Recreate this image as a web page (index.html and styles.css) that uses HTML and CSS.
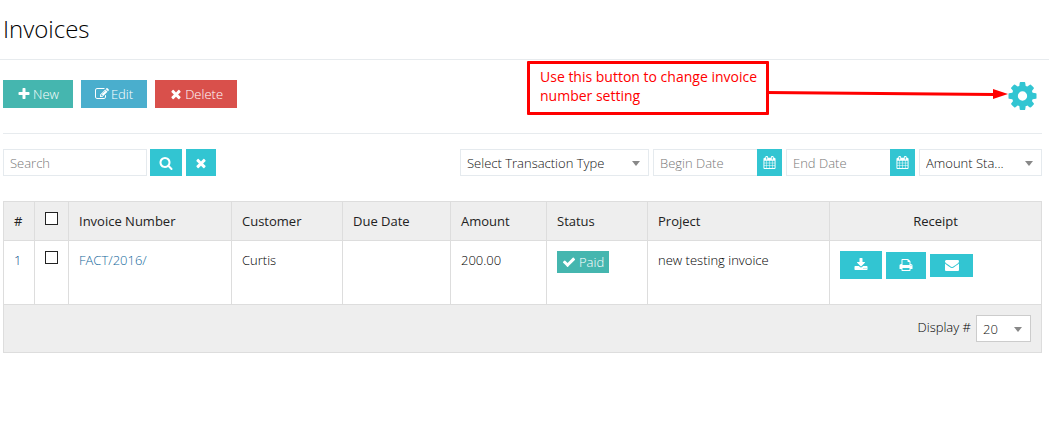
FILE: index.html
```html
<!DOCTYPE html>
<html lang="en">
<head>
<meta charset="utf-8">
<title>Invoices</title>
<link rel="stylesheet" href="styles.css">
</head>
<body>
<svg class="sprite" aria-hidden="true">
  <symbol id="plus" viewBox="0 0 1792 1792"><path d="M1600 736v192q0 40-28 68t-68 28h-416v416q0 40-28 68t-68 28h-192q-40 0-68-28t-28-68v-416h-416q-40 0-68-28t-28-68v-192q0-40 28-68t68-28h416v-416q0-40 28-68t68-28h192q40 0 68 28t28 68v416h416q40 0 68 28t28 68z"/></symbol>
  <symbol id="times" viewBox="0 0 1792 1792"><path d="M1490 1322q0 40-28 68l-136 136q-28 28-68 28t-68-28l-294-294-294 294q-28 28-68 28t-68-28l-136-136q-28-28-28-68t28-68l294-294-294-294q-28-28-28-68t28-68l136-136q28-28 68-28t68 28l294 294 294-294q28-28 68-28t68 28l136 136q28 28 28 68t-28 68l-294 294 294 294q28 28 28 68z"/></symbol>
  <symbol id="check" viewBox="0 0 1792 1792"><path d="M1671 566q0 40-28 68l-724 724-136 136q-28 28-68 28t-68-28l-136-136-362-362q-28-28-28-68t28-68l136-136q28-28 68-28t68 28l294 295 656-657q28-28 68-28t68 28l136 136q28 28 28 68z"/></symbol>
  <symbol id="search" viewBox="0 0 1792 1792"><path d="M1216 832q0-185-131.5-316.5t-316.5-131.5-316.5 131.5-131.5 316.5 131.5 316.5 316.5 131.5 316.5-131.5 131.5-316.5zm512 832q0 52-38 90t-90 38q-54 0-90-38l-343-342q-179 124-399 124-143 0-273.5-55.5t-225-150-150-225-55.5-273.5 55.5-273.5 150-225 225-150 273.5-55.5 273.5 55.5 225 150 150 225 55.5 273.5q0 220-124 399l343 343q37 37 37 90z"/></symbol>
  <symbol id="cog" viewBox="128 128 1536 1536"><path d="M1152 896q0-106-75-181t-181-75-181 75-75 181 75 181 181 75 181-75 75-181zm512-109v222q0 12-8 23t-20 13l-185 28q-19 54-39 91 35 50 107 138 10 12 10 25t-9 23q-27 37-99 108t-94 71q-12 0-26-9l-138-108q-44 23-91 38-16 136-29 186-7 28-36 28h-222q-14 0-24.5-8.5t-11.5-21.5l-28-184q-49-16-90-37l-141 107q-10 9-25 9-14 0-25-11-126-114-165-168-7-10-7-23 0-12 8-23 15-21 51-66.5t54-70.5q-27-50-41-99l-183-27q-13-2-21-12.5t-8-23.5v-222q0-12 8-23t19-13l186-28q14-46 39-92-40-57-107-138-10-12-10-24 0-10 9-23 26-36 98.5-107.5t94.5-71.5q13 0 26 10l138 107q44-23 91-38 16-136 29-186 7-28 36-28h222q14 0 24.5 8.5t11.5 21.5l28 184q49 16 90 37l142-107q9-9 24-9 13 0 25 10 129 119 165 170 7 8 7 22 0 12-8 23-15 21-51 66.5t-54 70.5q26 50 41 98l183 28q13 2 21 12.5t8 23.5z"/></symbol>
  <symbol id="download" viewBox="0 0 1792 1792"><path d="M1344 1344q0-26-19-45t-45-19-45 19-19 45 19 45 45 19 45-19 19-45zm256 0q0-26-19-45t-45-19-45 19-19 45 19 45 45 19 45-19 19-45zm128-224v320q0 40-28 68t-68 28h-1472q-40 0-68-28t-28-68v-320q0-40 28-68t68-28h465l135 136q58 56 136 56t136-56l136-136h464q40 0 68 28t28 68zm-325-569q17 41-14 70l-448 448q-18 19-45 19t-45-19l-448-448q-31-29-14-70 17-39 59-39h256v-448q0-26 19-45t45-19h256q26 0 45 19t19 45v448h256q42 0 59 39z"/></symbol>
  <symbol id="print" viewBox="0 0 1792 1792"><path d="M448 1536h896v-256h-896v256zm0-640h896v-384h-160q-40 0-68-28t-28-68v-160h-640v640zm1152 64q0-26-19-45t-45-19-45 19-19 45 19 45 45 19 45-19 19-45zm128 0v416q0 13-9.5 22.5t-22.5 9.5h-224v160q0 40-28 68t-68 28h-960q-40 0-68-28t-28-68v-160h-224q-13 0-22.5-9.5t-9.5-22.5v-416q0-79 56.5-135.5t135.5-56.5h64v-544q0-40 28-68t68-28h672q40 0 88 20t76 48l152 152q28 28 48 76t20 88v256h64q79 0 135.5 56.5t56.5 135.5z"/></symbol>
  <symbol id="envelope" viewBox="0 0 1792 1792"><path d="M1792 710v794q0 66-47 113t-113 47h-1472q-66 0-113-47t-47-113v-794q44 49 101 87 362 246 497 345 57 42 92.5 65.5t94.5 48 110 24.5h2q51 0 110-24.5t94.5-48 92.5-65.5q170-123 498-345 57-39 100-87zm0-294q0 79-49 151t-122 123q-376 261-468 325-10 7-42.5 31t-54 38.5-52 32.5-57.5 27-50 9h-2q-23 0-50-9t-57.5-27-52-32.5-54-38.5-42.5-31q-91-64-262-182.5t-205-142.5q-62-42-117-115.5t-55-136.5q0-78 41.5-130t118.5-52h1472q65 0 112.5 47t47.5 113z"/></symbol>
  <symbol id="edit" viewBox="0 0 1792 1792"><path d="M888 1184l116-116-152-152-116 116v56h96v96h56zm440-720q-16-16-33 1l-350 350q-17 17-1 33t33-1l350-350q17-17 1-33zm80 594v190q0 119-84.5 203.5t-203.5 84.5h-832q-119 0-203.5-84.5t-84.5-203.5v-832q0-119 84.5-203.5t203.5-84.5h832q63 0 117 25 15 7 18 23 3 17-9 29l-49 49q-14 14-32 8-23-6-45-6h-832q-66 0-113 47t-47 113v832q0 66 47 113t113 47h832q66 0 113-47t47-113v-126q0-13 9-22l64-64q15-15 35-7t20 29zm-96-738l288 288-672 672h-288v-288zm444 132l-92 92-288-288 92-92q28-28 68-28t68 28l152 152q28 28 28 68t-28 68z"/></symbol>
  <symbol id="calendar" viewBox="0 0 1792 1792"><path d="M192 1664h288v-288h-288v288zm352 0h320v-288h-320v288zm-352-352h288v-320h-288v320zm352 0h320v-320h-320v320zm-352-384h288v-288h-288v288zm736 736h320v-288h-320v288zm-384-736h320v-288h-320v288zm768 736h288v-288h-288v288zm-384-352h320v-320h-320v320zm-352-864v-288q0-13-9.5-22.5t-22.5-9.5h-64q-13 0-22.5 9.5t-9.5 22.5v288q0 13 9.5 22.5t22.5 9.5h64q13 0 22.5-9.5t9.5-22.5zm736 864h288v-320h-288v320zm-384-384h320v-288h-320v288zm384 0h288v-288h-288v288zm32-480v-288q0-13-9.5-22.5t-22.5-9.5h-64q-13 0-22.5 9.5t-9.5 22.5v288q0 13 9.5 22.5t22.5 9.5h64q13 0 22.5-9.5t9.5-22.5zm384-64v1280q0 52-38 90t-90 38h-1408q-52 0-90-38t-38-90v-1280q0-52 38-90t90-38h128v-96q0-66 47-113t113-47h64q66 0 113 47t47 113v96h384v-96q0-66 47-113t113-47h64q66 0 113 47t47 113v96h128q52 0 90 38t38 90z"/></symbol>
</svg>

<header class="page-header"><h1 class="page-title">Invoices</h1></header>

<main class="content">
  <div class="toolbar">
    <button class="btn btn-new" type="button"><svg class="icon"><use href="#plus"/></svg>New</button>
    <button class="btn btn-edit" type="button"><svg class="icon"><use href="#edit"/></svg>Edit</button>
    <button class="btn btn-delete" type="button"><svg class="icon"><use href="#times"/></svg>Delete</button>
    <button class="settings" type="button" aria-label="Settings"><svg class="icon-cog"><use href="#cog"/></svg></button>
    <div class="callout">
      <p class="callout-text">Use this button to change invoice number setting</p>
      <svg class="callout-arrow" viewBox="0 0 242 12" aria-hidden="true"><path d="M0 3l228 2v3L0 6z"/><path d="M227 1l15 5-15 5z"/></svg>
    </div>
  </div>

  <form class="filters">
    <input class="field search-field" type="text" placeholder="Search" aria-label="Search">
    <button class="btn-square btn-search" type="button" aria-label="Search"><svg class="icon"><use href="#search"/></svg></button>
    <button class="btn-square btn-clear" type="button" aria-label="Clear"><svg class="icon"><use href="#times"/></svg></button>
    <div class="filters-right">
      <span class="select type-select"><select class="field" aria-label="Transaction type"><option>Select Transaction Type</option></select></span>
      <span class="date"><input class="field" type="text" placeholder="Begin Date" aria-label="Begin date"><button class="btn-date" type="button" aria-label="Pick begin date"><svg class="icon-small"><use href="#calendar"/></svg></button></span>
      <span class="date"><input class="field" type="text" placeholder="End Date" aria-label="End date"><button class="btn-date" type="button" aria-label="Pick end date"><svg class="icon-small"><use href="#calendar"/></svg></button></span>
      <span class="select status-select"><select class="field" aria-label="Amount status"><option>Amount Sta...</option></select></span>
    </div>
  </form>

  <table class="invoices">
    <colgroup>
      <col class="col-index"><col class="col-check"><col class="col-number"><col class="col-customer"><col class="col-due"><col class="col-amount"><col class="col-status"><col class="col-project"><col class="col-receipt">
    </colgroup>
    <thead>
      <tr>
        <th>#</th>
        <th><input class="check" type="checkbox" aria-label="Select all"></th>
        <th>Invoice Number</th>
        <th>Customer</th>
        <th>Due Date</th>
        <th>Amount</th>
        <th>Status</th>
        <th>Project</th>
        <th class="center">Receipt</th>
      </tr>
    </thead>
    <tbody>
      <tr>
        <td class="index">1</td>
        <td><input class="check" type="checkbox" aria-label="Select invoice 1"></td>
        <td><a class="link" href="#">FACT/2016/</a></td>
        <td>Curtis</td>
        <td></td>
        <td>200.00</td>
        <td><span class="label-paid"><svg class="icon"><use href="#check"/></svg>Paid</span></td>
        <td>new testing invoice</td>
        <td>
          <div class="actions">
            <button class="action action-download" type="button" aria-label="Download"><svg class="icon"><use href="#download"/></svg></button>
            <button class="action action-print" type="button" aria-label="Print"><svg class="icon"><use href="#print"/></svg></button>
            <button class="action action-mail" type="button" aria-label="Email"><svg class="icon"><use href="#envelope"/></svg></button>
          </div>
        </td>
      </tr>
    </tbody>
    <tfoot>
      <tr>
        <td colspan="9">
          <div class="paging">
            <label for="display">Display #</label>
            <span class="select display-select"><select class="field" id="display"><option>20</option></select></span>
          </div>
        </td>
      </tr>
    </tfoot>
  </table>
</main>
</body>
</html>
```
FILE: styles.css
```css
* { box-sizing: border-box; }

body {
  margin: 0;
  background: #fff;
  color: #000;
  font: 300 13px/20px "Open Sans", "Noto Sans", sans-serif;
}

button, input, select { font: inherit; margin: 0; }

button {
  display: inline-flex;
  align-items: center;
  justify-content: center;
  padding: 0;
  border: 0;
  color: #fff;
  cursor: pointer;
}

.sprite { position: absolute; width: 0; height: 0; }
.icon { width: 14px; height: 14px; fill: currentColor; flex: none; }
.icon-small { width: 13px; height: 13px; fill: currentColor; flex: none; }

.page-header {
  padding: 11px 3px 12px;
  border-bottom: 1px solid #e7ebee;
}

.page-title {
  margin: 0;
  font-size: 24px;
  font-weight: 300;
  line-height: 36px;
}

.content { padding: 0 7px 0 3px; }

.toolbar {
  position: relative;
  display: flex;
  align-items: center;
  gap: 8px;
  padding: 20px 0 25px;
  border-bottom: 1px solid #e7ebee;
}

.btn { height: 28px; padding: 0 14px; gap: 2px; }
.btn-new { background: #45b6af; }
.btn-edit { background: #4aaecd; }
.btn-delete { background: #d9504b; }

.settings {
  margin: 0 5px 0 auto;
  background: none;
  color: #32c5d2;
}
.icon-cog { width: 29px; height: 28px; fill: currentColor; margin-bottom: -3px; }

.callout {
  position: absolute;
  top: 1px;
  right: 273px;
  width: 242px;
  height: 54px;
  padding: 3px 8px 3px 10px;
  border: 3px solid #f00;
  border-radius: 1px;
}
.callout-text {
  margin: 0;
  color: #f00;
  font: 400 14px/19px "Open Sans", "Noto Sans", sans-serif;
}
.callout-arrow {
  position: absolute;
  top: 24px;
  left: 100%;
  width: 242px;
  height: 12px;
  fill: #f00;
}

.filters { display: flex; padding: 15px 0 25px; }

.field {
  width: 100%;
  height: 27px;
  padding: 0 6px;
  border: 1px solid #e5eaee;
  border-radius: 0;
  background: #fff;
  color: #111;
  appearance: none;
}
.field::placeholder { color: #777; opacity: 1; }
.search-field { width: 144px; }

.btn-square { height: 27px; background: #32c5d2; }
.btn-search { width: 32px; margin-left: 3px; }
.btn-clear { width: 30px; margin-left: 4px; }

.filters-right { display: flex; gap: 4px; margin-left: auto; }

.select { position: relative; display: block; }
.select::after {
  content: "";
  position: absolute;
  top: 12px;
  right: 9px;
  border: solid transparent;
  border-width: 5px 4px 0;
  border-top-color: #888;
  pointer-events: none;
}
.type-select { width: 189px; }
.status-select { width: 123px; }
.display-select { width: 55px; }
.display-select .field { border-color: #ccc; }

.date { display: flex; width: 129px; }
.date .field { flex: 1; min-width: 0; border-right: 0; }
.btn-date { width: 25px; background: #32c5d2; }

.invoices {
  width: 100%;
  border-collapse: collapse;
  table-layout: fixed;
}
.invoices th, .invoices td {
  padding: 9px 10px;
  border: 1px solid #ddd;
  text-align: left;
  vertical-align: top;
}
.invoices th { background: #eee; color: #222; font-weight: 400; }
.invoices tbody td { height: 64px; }
.invoices tfoot td { padding: 10px; background: #eee; }
.invoices .center { text-align: center; }

.col-index { width: 3%; }
.col-check { width: 34px; }
.col-number { width: 163px; }
.col-customer { width: 111px; }
.col-due { width: 108px; }
.col-amount { width: 96px; }
.col-status { width: 101px; }
.col-project { width: 182px; }
.col-receipt { width: 212px; }

.check {
  display: block;
  width: 13px;
  height: 13px;
  margin-top: 1px;
  border: 1px solid #222;
  background: #fff;
  appearance: none;
}

.index { color: #0f4f8a; }
.link { color: #16699c; text-decoration: none; }

.label-paid {
  display: inline-flex;
  align-items: center;
  gap: 3px;
  height: 22px;
  padding: 0 5px;
  margin-top: 1px;
  background: #45b6af;
  color: #fff;
}

.actions { display: flex; align-items: center; gap: 4px; margin-top: 1px; }
.action { background: #32c5d2; }
.action-download { width: 42px; height: 28px; }
.action-print { width: 40px; height: 27px; }
.action-mail { width: 43px; height: 23px; }

.paging { display: flex; justify-content: flex-end; gap: 5px; }
.paging label { line-height: 25px; }
```
